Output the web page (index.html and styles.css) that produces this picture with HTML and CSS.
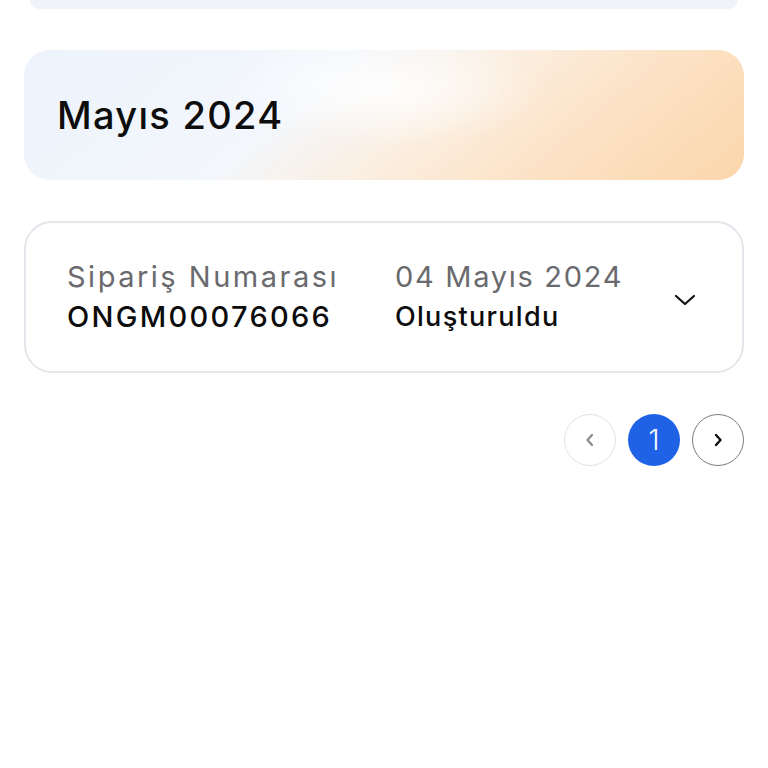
FILE: index.html
```html
<!DOCTYPE html>
<html lang="tr">
<head>
<meta charset="utf-8">
<link rel="stylesheet" href="styles.css">
</head>
<body>
<div class="page">
  <div class="top-card"></div>
  <div class="month-banner">
    <h2 class="month-title">Mayıs 2024</h2>
  </div>
  <div class="order-card">
    <div class="order-col order-col-id">
      <div class="order-label">Sipariş Numarası</div>
      <div class="order-value">ONGM00076066</div>
    </div>
    <div class="order-col order-col-date">
      <div class="order-label order-date">04 Mayıs 2024</div>
      <div class="order-status">Oluşturuldu</div>
    </div>
    <div class="order-toggle">
      <svg width="22" height="14" viewBox="0 0 22 14"><path d="M2 3 L11 11 L20 3" fill="none" stroke="#111" stroke-width="2.2" stroke-linecap="round" stroke-linejoin="round"/></svg>
    </div>
  </div>
  <div class="pagination">
    <button class="page-btn page-prev">
      <svg width="12" height="16" viewBox="0 0 12 16"><path d="M8 3 L3.5 8 L8 13" fill="none" stroke="#8a8a8a" stroke-width="2.2" stroke-linecap="round" stroke-linejoin="round"/></svg>
    </button>
    <button class="page-btn page-active">1</button>
    <button class="page-btn page-next">
      <svg width="12" height="16" viewBox="0 0 12 16"><path d="M4 3 L8.5 8 L4 13" fill="none" stroke="#111" stroke-width="2.4" stroke-linecap="round" stroke-linejoin="round"/></svg>
    </button>
  </div>
</div>
</body>
</html>
```
FILE: styles.css
```css
* { box-sizing: border-box; }
html, body { margin: 0; padding: 0; background: #fff; }
body { font-family: "Inter", "Open Sans", sans-serif; color: #111; }
.page { width: 768px; height: 768px; overflow: hidden; padding: 0 24px; display: flex; flex-direction: column; }
.top-card {
  height: 9px; margin: 0 6px; background: #f2f3f8;
  border-radius: 0 0 16px 16px;
}
.month-banner {
  margin-top: 41px; height: 130px; border-radius: 26px;
  display: flex; align-items: center; padding-left: 33px;
  background:
    radial-gradient(ellipse 22% 45% at 50% 30%, rgba(255,255,255,0.9), rgba(255,255,255,0) 100%),
    linear-gradient(140deg, #edf3fc 0%, #f3f7fc 38%, #fbefe2 55%, #fce3c7 74%, #fbd6ab 100%);
}
.month-title { margin: 0; font-size: 38px; font-weight: 500; letter-spacing: 1.3px; color: #0d0d0d; }
.order-card {
  margin-top: 41px; height: 152px; border: 2px solid #e3e6ea; border-radius: 28px;
  display: flex; align-items: center; padding: 0 46px 0 41px;
}
.order-col { display: flex; flex-direction: column; }
.order-col-id { width: 328px; }
.order-col-date { flex: 1; }
.order-label { font-size: 29px; color: #6a6a6e; line-height: 40px; font-weight: 400; letter-spacing: 2.5px; }
.order-date { letter-spacing: 1.7px; }
.order-value { font-size: 29px; color: #0c0c0c; line-height: 40px; font-weight: 500; letter-spacing: 2.3px; }
.order-status { font-size: 27px; color: #0c0c0c; line-height: 40px; font-weight: 500; letter-spacing: 1.3px; }
.order-toggle { width: 22px; display: flex; align-items: center; margin-top: 6px; }
.pagination { margin-top: 41px; display: flex; justify-content: flex-end; gap: 12px; }
.page-btn {
  width: 52px; height: 52px; border-radius: 50%; background: #fff;
  display: flex; align-items: center; justify-content: center; padding: 0;
  font-family: "Inter", sans-serif;
}
.page-prev { border: 1px solid #e3e3e3; }
.page-next { border: 1px solid #7d7d7d; }
.page-active { background: #1f62e6; border: none; color: #fff; font-size: 28px; font-weight: 300; }
```
